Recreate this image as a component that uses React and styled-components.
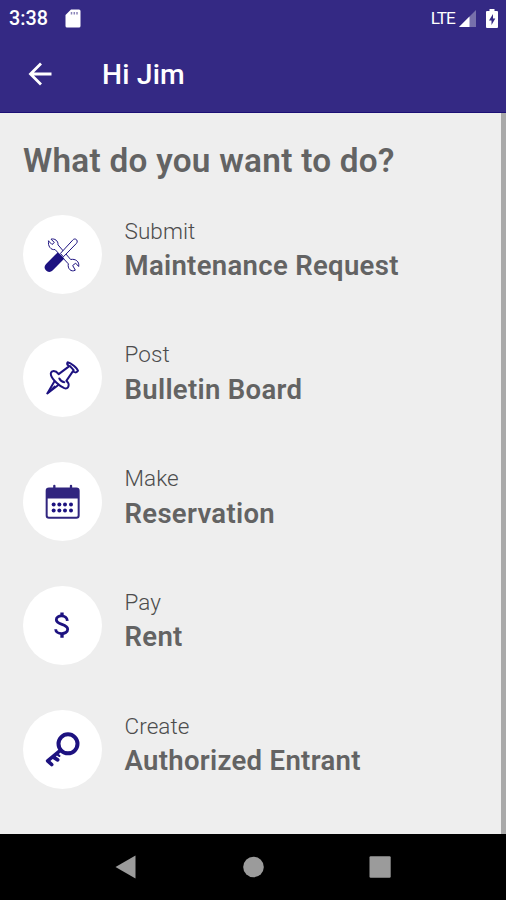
import React from 'react';
import styled, { createGlobalStyle } from 'styled-components';

const INDIGO = '#342984';
const INK = '#1d1280';

const GlobalStyle = createGlobalStyle`
  * { box-sizing: border-box; }
  body { margin: 0; background: #000; font-family: Roboto, sans-serif; }
`;

const Screen = styled.div`
  width: 506px;
  height: 900px;
  display: flex;
  flex-direction: column;
  overflow: hidden;
  background: #eee;
`;

const Header = styled.header`
  height: 113px;
  flex: none;
  background: ${INDIGO};
  color: #fff;
  border-bottom: 1px solid #1c0f75;
`;

const StatusBar = styled.div`
  height: 36px;
  display: flex;
  align-items: center;
  justify-content: space-between;
  padding: 0 8px 0 9px;
`;

const StatusGroup = styled.div`
  display: flex;
  align-items: center;
`;

const Clock = styled.span`
  width: 56px;
  padding-top: 2px;
  font-size: 19.8px;
  font-weight: 500;
  line-height: 34px;
`;

const Network = styled.span`
  font-size: 17.2px;
  line-height: 36px;
  letter-spacing: -0.9px;
  margin-right: 4px;
`;

const BatterySlot = styled.span`
  display: flex;
  margin-left: 10px;
`;

const TitleBar = styled.div`
  height: 76px;
  display: flex;
  align-items: center;
  padding: 0 0 0 28px;
`;

const BackButton = styled.button`
  width: 74px;
  padding: 0 0 1px;
  border: 0;
  background: none;
  color: inherit;
  display: flex;
`;

const Title = styled.h1`
  margin: 0;
  padding-top: 1px;
  font-size: 28.3px;
  font-weight: 500;
  line-height: 40px;
  letter-spacing: 0.15px;
`;

const Content = styled.main`
  height: 721px;
  flex: none;
  padding: 27.5px 0 0 23px;
  border-right: 5px solid #a9a9a9;
`;

const Heading = styled.h2`
  margin: 0 0 34px;
  font-size: 33.3px;
  font-weight: 600;
  line-height: 40px;
  letter-spacing: 0.27px;
  color: #636363;
`;

const Actions = styled.div`
  display: flex;
  flex-direction: column;
  gap: 44.8px;
`;

const Action = styled.div`
  height: 79px;
  display: flex;
  gap: 22.5px;
`;

const Disc = styled.div`
  width: 79px;
  height: 79px;
  flex: none;
  border-radius: 50%;
  background: #fff;
  svg { display: block; }
`;

const Verb = styled.div`
  margin-top: 1px;
  font-size: 22.5px;
  font-weight: 300;
  line-height: 30px;
  letter-spacing: 0.08px;
  color: #4c4c4c;
`;

const Subject = styled.div`
  margin-top: 2.5px;
  font-size: 27.5px;
  font-weight: 600;
  line-height: 36px;
  letter-spacing: 0.32px;
  color: #636363;
`;

const NavBar = styled.nav`
  flex: 1;
  display: flex;
  align-items: center;
  gap: 104px;
  padding: 0 0 0 115px;
  background: #000;
`;

const DiscIcon = ({ children }) => (
  <svg width="79" height="79" viewBox="21 18.5 237 237" fill="none" stroke={INK} strokeLinecap="round" strokeLinejoin="round">
    {children}
  </svg>
);

const ToolsIcon = () => (
  <DiscIcon>
    <path strokeWidth="3" d="M98 97 L108 107 L115 101 L105 91 C116 88 127 96 126 108 L164 152 C178 149 191 158 188 173 L179 163 L170 170 L178 184 C165 191 154 179 157 165 L117 122 C105 125 94 111 98 97Z" />
    <path strokeWidth="3" fill="#fff" d="M134 133 L170 94 C177 85 189 95 181 104 L143 143Z" />
    <path strokeWidth="5" fill={INK} d="M125 134 L142 149 L108 183 C97 194 82 178 92 167Z" />
  </DiscIcon>
);

const PinIcon = () => (
  <DiscIcon>
    <g strokeWidth="6">
      <path d="M155 91 C150 99 157 100 160 103 L128 127 C117 113 101 116 105 130 C109 143 132 164 145 169 C158 173 163 157 151 147 L171 118 C174 121 181 125 186 117 C184 109 165 93 155 91Z" />
      <path d="M162 103 L173 115 M130 140 Q134 149 145 151" />
      <path d="M115 149 L94 185 L126 160" />
      <path d="M94 184 L116 163" strokeWidth="4" />
    </g>
  </DiscIcon>
);

const CalendarIcon = () => (
  <DiscIcon>
    <rect x="92" y="98" width="96" height="88" rx="7" strokeWidth="6" stroke="#30257f" />
    <path d="M92 128 V104 Q92 97 99 97 H181 Q188 97 188 104 V128Z" fill="#30257f" stroke="none" />
    <path d="M115 90 V99 M165 90 V99" strokeWidth="7" stroke="#30257f" />
    {[113, 130, 147, 165].map((x) => (
      <React.Fragment key={x}>
        <circle cx={x} cy="146" r="6" fill={INK} stroke="none" />
        <circle cx={x} cy="164" r="6" fill={INK} stroke="none" />
      </React.Fragment>
    ))}
  </DiscIcon>
);

const DollarIcon = () => (
  <DiscIcon>
    <path strokeWidth="8.5" strokeLinecap="butt" d="M154 123 C153 103 120 104 121 120 C122 136 155 131 155 148 C155 166 119 165 119 148" />
    <path strokeWidth="10" strokeLinecap="butt" d="M138 98 V109 M138 162 V174" />
  </DiscIcon>
);

const KeyIcon = () => (
  <DiscIcon>
    <circle cx="156" cy="120" r="28.5" strokeWidth="12" />
    <path strokeWidth="11" d="M134 139 L95 171 L107 182 M111 159 L125 168" />
    <path strokeWidth="7" d="M122 150 L130 156" />
  </DiscIcon>
);

const ACTIONS = [
  { verb: 'Submit', subject: 'Maintenance Request', Icon: ToolsIcon },
  { verb: 'Post', subject: 'Bulletin Board', Icon: PinIcon },
  { verb: 'Make', subject: 'Reservation', Icon: CalendarIcon },
  { verb: 'Pay', subject: 'Rent', Icon: DollarIcon },
  { verb: 'Create', subject: 'Authorized Entrant', Icon: KeyIcon },
];

export default function App() {
  return (
    <Screen>
      <GlobalStyle />
      <Header>
        <StatusBar>
          <StatusGroup>
            <Clock>3:38</Clock>
            <svg width="16" height="19" viewBox="0 0 16 19">
              <path d="M6 0.5 H14 Q15.5 0.5 15.5 2 V17 Q15.5 18.5 14 18.5 H2 Q0.5 18.5 0.5 17 V6Z" fill="#fff" />
              <path d="M6.5 3 V5.5 M9.3 3 V5.5 M12 3 V5.5" stroke="#8983b8" strokeWidth="1.5" />
            </svg>
          </StatusGroup>
          <StatusGroup>
            <Network>LTE</Network>
            <svg width="17" height="17" viewBox="0 0 17 17">
              <path d="M17 0 V17 H0Z" fill="#7770ab" />
              <path d="M10.5 6.5 V17 H0Z" fill="#fff" />
            </svg>
            <BatterySlot>
              <svg width="12" height="19" viewBox="0 0 12 19">
                <path d="M3.5 0 H8.5 V2 H11 Q12 2 12 3 V18 Q12 19 11 19 H1 Q0 19 0 18 V3 Q0 2 1 2 H3.5Z" fill="#fff" />
                <path d="M7 5 L3 11.5 H5.5 V16 L9.3 9.5 H7Z" fill={INDIGO} />
              </svg>
            </BatterySlot>
          </StatusGroup>
        </StatusBar>
        <TitleBar>
          <BackButton aria-label="Back">
            <svg width="24" height="24" viewBox="0 0 24 24" fill="none" stroke="#fff" strokeWidth="2.8">
              <path d="M23.5 12 H2.5 M13 1.5 L2.5 12 L13 22.5" />
            </svg>
          </BackButton>
          <Title>Hi Jim</Title>
        </TitleBar>
      </Header>
      <Content>
        <Heading>What do you want to do?</Heading>
        <Actions>
          {ACTIONS.map(({ verb, subject, Icon }) => (
            <Action key={subject}>
              <Disc><Icon /></Disc>
              <div>
                <Verb>{verb}</Verb>
                <Subject>{subject}</Subject>
              </div>
            </Action>
          ))}
        </Actions>
      </Content>
      <NavBar>
        <svg width="21" height="24" viewBox="0 0 21 24"><path d="M0.5 12 L20.5 0.5 V23.5Z" fill="#9b9b9b" /></svg>
        <svg width="24" height="24" viewBox="0 0 24 24"><circle cx="13.5" cy="12" r="10.3" fill="#9b9b9b" /></svg>
        <svg width="24" height="24" viewBox="0 0 24 24"><rect x="1.5" y="1.3" width="21.2" height="21.5" rx="1.2" fill="#9b9b9b" /></svg>
      </NavBar>
    </Screen>
  );
}
